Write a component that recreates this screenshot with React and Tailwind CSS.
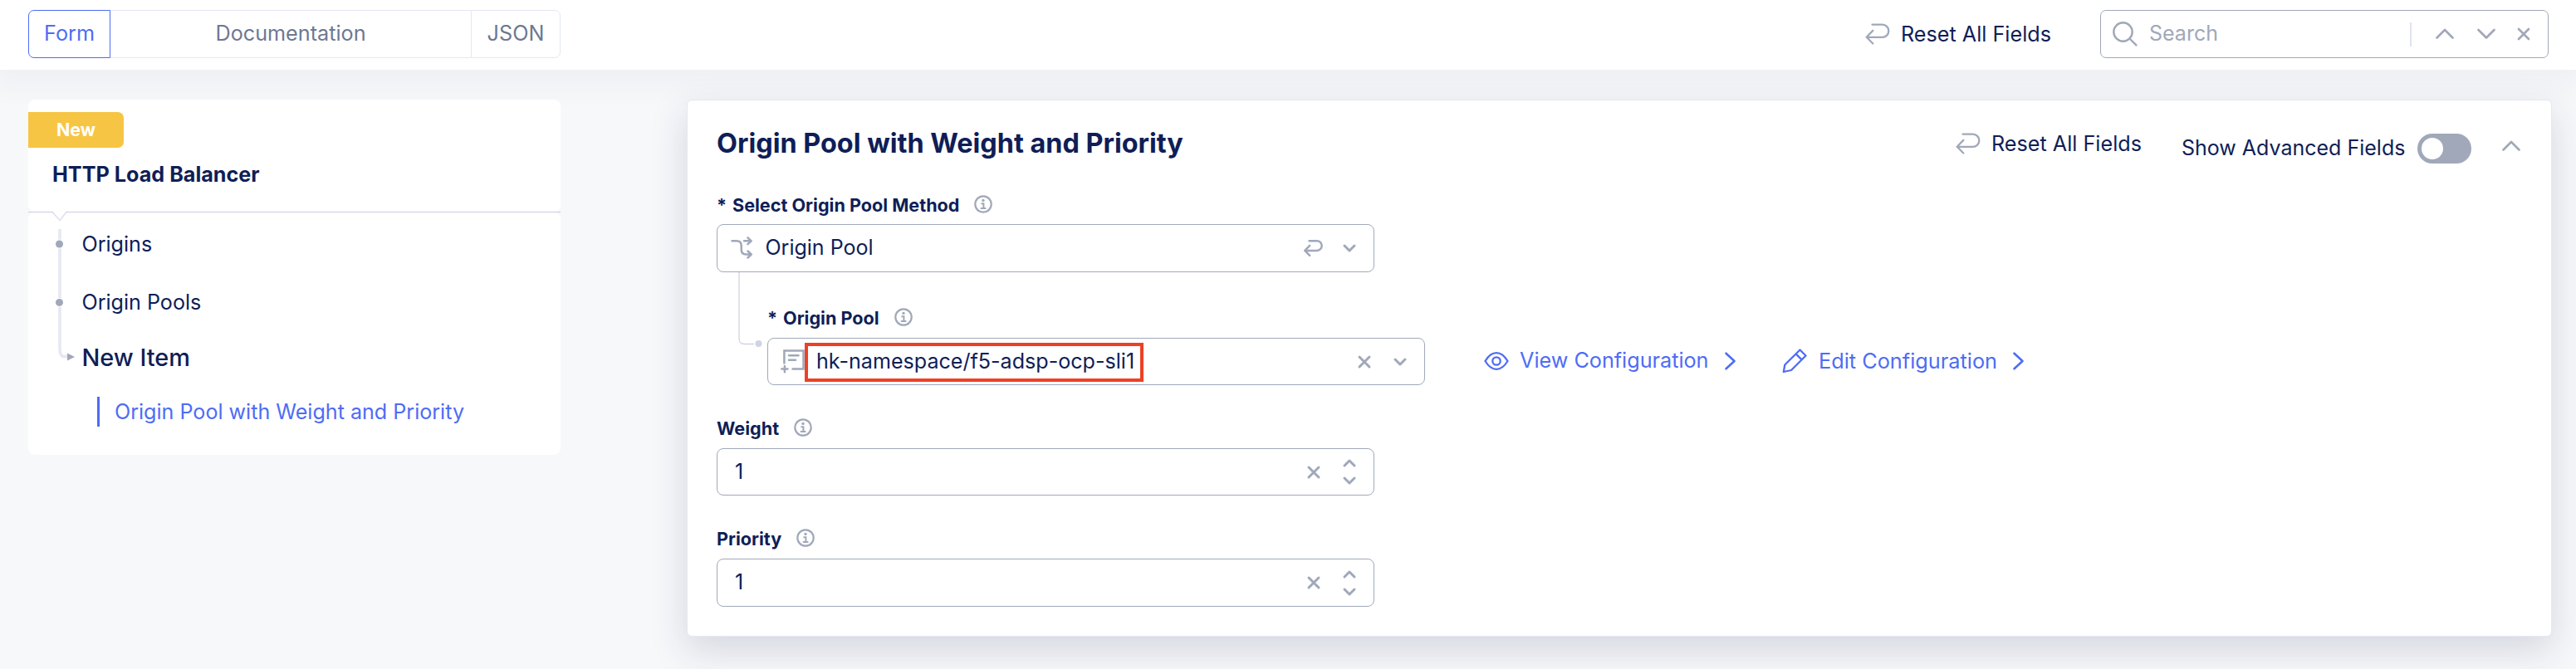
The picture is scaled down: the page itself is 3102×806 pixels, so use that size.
const NAVY = "text-[#0f1e57]";

function ReturnIcon({ className, w = 2.3 }) {
  return (
    <svg className={className} viewBox="0 0 30 26" fill="none" stroke="#a0a8b9" strokeWidth={w} strokeLinecap="round" strokeLinejoin="round">
      <path d="M8.500 1.600H20.700a7.600 7.600 0 0 1 0 15.200H1.700M9.300 8.900L1.700 16.800L9.300 24.500" />
    </svg>
  );
}

function Chevron({ className, d, w = 3 }) {
  return (
    <svg className={className} viewBox="0 0 24 24" fill="none" stroke="currentColor" strokeWidth={w} strokeLinecap="round" strokeLinejoin="round">
      <path d={d} />
    </svg>
  );
}
const UP = "M2.5 16.500L12 7L21.5 16.500";
const DOWN = "M2.5 7L12 16.500L21.5 7";
const SMALL_UP = "M6 15L12 9L18 15";
const SMALL_DOWN = "M6 9L12 15L18 9";
const CROSS = "M6 6L18 18M18 6L6 18";
const RIGHT = "M2.500 2.700L12.500 12L2.500 21.300";

function Info({ className = "" }) {
  return (
    <svg className={`h-[22px] w-[22px] shrink-0 ${className}`} viewBox="0 0 22 22" fill="none" stroke="#a0a8b9" strokeWidth="2.2">
      <circle cx="11" cy="11" r="9.7" />
      <circle cx="11" cy="6.4" r="1.7" fill="#a0a8b9" stroke="none" />
      <path d="M8.4 10.2H11.4V16M7.8 16H14.4" strokeWidth="2" />
    </svg>
  );
}

function Reset() {
  return (
    <div className="flex h-[32px] items-center text-[25.2px] leading-[32px] whitespace-nowrap">
      <ReturnIcon className="mr-[13px] h-[26px] w-[30px]" />
      <span className="w-[182px]">Reset All Fields</span>
    </div>
  );
}

function Label({ children, required }) {
  return (
    <div className="flex h-[30px] items-center text-[21.6px] leading-[30px] font-bold whitespace-nowrap">
      {required && <span className="w-[19px] shrink-0">*</span>}
      <span>{children}</span>
      <Info className="-mt-[3px] ml-[18px]" />
    </div>
  );
}

function NumberField({ value, height }) {
  return (
    <div className={`flex w-[792px] items-center rounded-[8px] border border-[#a0a8b9] pr-[17px] pl-[21px] text-[25px] ${height}`}>
      <span className="flex-1">{value}</span>
      <Chevron d={CROSS} className="mr-[19px] h-6 w-6 text-[#a0a8b9]" />
      <div className="flex flex-col text-[#a0a8b9]">
        <Chevron d={SMALL_UP} className="-mb-[3px] h-6 w-6" />
        <Chevron d={SMALL_DOWN} className="h-6 w-6" />
      </div>
    </div>
  );
}

function Header() {
  return (
    <header className="relative flex h-[84px] items-start bg-white pt-[12px] pr-[33px] pl-[34px] shadow-[0_14px_30px_10px_rgba(20,30,50,0.03)]">
      <div className="flex h-[58px] w-[641px] text-[25.2px] text-[#6e7891]">
        <div className="flex w-[99px] items-center justify-center rounded-l-[7px] border border-[#4f6cf5] text-[#4f6cf5]">Form</div>
        <div className="flex flex-1 items-center justify-center border-y border-[#e5e7f3]">Documentation</div>
        <div className="flex w-[108px] items-center justify-center rounded-r-[7px] border border-[#e5e7f3]">JSON</div>
      </div>
      <div className="flex-1" />
      <div className="mt-[13px] mr-[58px]"><Reset /></div>
      <div className="flex h-[58px] w-[540px] items-center rounded-[7px] border border-[#a0a8b9] pl-[14px] text-[#a0a8b9]">
        <svg className="h-[30px] w-[30px]" viewBox="0 0 30 30" fill="none" stroke="currentColor" strokeWidth="2.4" strokeLinecap="round">
          <circle cx="12.5" cy="12.5" r="11.2" />
          <path d="M20.5 20.5L28.4 28.4" />
        </svg>
        <span className="ml-[14px] flex-1 text-[25px]">Search</span>
        <span className="h-[29px] w-[2px] bg-[#e0e3ef]" />
        <div className="flex pr-[17px] pl-[28px]">
          <Chevron d={UP} className="h-6 w-6" w={2.7} />
          <Chevron d={DOWN} className="ml-[26px] h-6 w-6" w={2.7} />
          <Chevron d={CROSS} className="ml-[21px] h-6 w-6" w={2.7} />
        </div>
      </div>
    </header>
  );
}

function Sidebar() {
  return (
    <aside className="w-[641px]">
      <div className="h-[135px] rounded-[8px] bg-white pt-[15px]">
        <div className="flex h-[43px] w-[115px] items-center justify-center rounded-r-[7px] bg-[#f7c544] text-[21.4px] font-bold text-white">New</div>
        <h2 className="mt-[16px] pl-[29px] text-[25.2px] leading-[32px] font-bold">HTTP Load Balancer</h2>
      </div>
      <div className="h-px bg-[#cbcedf]" />
      <div className="relative h-[292px] rounded-[8px] bg-white text-[25.1px] leading-[32px]">
        <svg className="absolute -top-[2px] left-0 h-[190px] w-[80px]" viewBox="0 0 80 190" fill="none">
          <path d="M29 0H46L38 10.5Z" fill="#fff" />
          <path d="M29 1.5L38 11.5L46 1.5" stroke="#dcdeea" strokeWidth="1.4" />
          <path d="M38 22V166Q38 175.500 43 175.500H48" stroke="#e5e8f2" strokeWidth="3.6" />
          <circle cx="37.500" cy="40" r="5.500" fill="#fff" />
          <circle cx="37.500" cy="40" r="4.500" fill="#a0a8b9" />
          <circle cx="37.500" cy="110.400" r="5.500" fill="#fff" />
          <circle cx="37.500" cy="110.400" r="4.500" fill="#a0a8b9" />
          <path d="M47 171.500V180.500L56 176Z" fill="#a0a8b9" />
        </svg>
        <div className="pt-[22px] pl-[64.5px]">Origins</div>
        <div className="pt-[38px] pl-[64.5px]">Origin Pools</div>
        <div className="pt-[35px] pl-[64.5px] text-[28.9px] font-medium">New Item</div>
        <div className="mt-[31px] ml-[83px] flex h-[36px] items-center border-l-[3px] border-[#4f6cf5] pl-[18px] text-[#4f6cf5]">Origin Pool with Weight and Priority</div>
      </div>
    </aside>
  );
}

function Panel() {
  return (
    <main className="relative ml-[152px] h-[647px] w-[2246px] rounded-[6px] border border-[#e5e7f3] bg-white pl-[35px] shadow-[0_16px_44px_2px_rgba(30,40,80,0.15)]">
      <div className="flex h-[109px] items-start">
        <h1 className="mt-[32px] flex-1 text-[32.4px] leading-[40px] font-bold">Origin Pool with Weight and Priority</h1>
        <div className="mt-[36px] mr-[47px]"><Reset /></div>
        <div className="mt-[40px] flex h-[36px] items-center">
          <span className="mr-[15px] w-[269px] text-[25px] whitespace-nowrap">Show Advanced Fields</span>
          <span className="flex h-[36px] w-[65px] items-center rounded-full bg-[#a0a8b9] pl-[5px]">
            <span className="h-[26px] w-[26px] rounded-full bg-white" />
          </span>
          <Chevron d={UP} className="-mt-[7px] mr-[36px] ml-[36px] h-6 w-6 text-[#a0a8b9]" w={2.7} />
        </div>
      </div>

      <div className="mt-[2px] h-[38px]"><Label required>Select Origin Pool Method</Label></div>
      <div className="flex h-[58px] w-[792px] items-center rounded-[8px] border border-[#a0a8b9] pr-[17px] pl-[16px] text-[25px]">
        <svg className="h-[28px] w-[28px]" viewBox="0 0 28 28" fill="none" stroke="#a0a8b9" strokeWidth="2.500" strokeLinecap="round" strokeLinejoin="round">
          <path d="M1.500 5.300H7Q12.700 5.300 12.700 11V15.500Q12.700 21.500 18.500 21.500H24.500M20.500 17.500L24.700 21.500L20.500 25.500M16 5.300H24.500M20.500 1.400L24.700 5.300L20.500 9.200" />
        </svg>
        <span className="ml-[13.5px] flex-1">Origin Pool</span>
        <ReturnIcon className="mr-[20px] h-[20px] w-[23px]" w={3.2} />
        <Chevron d={SMALL_DOWN} className="h-6 w-6 text-[#a0a8b9]" />
      </div>

      <div className="relative h-[49px] pt-[40px] pl-[61px]">
        <svg className="absolute top-0 left-[26px] h-[94px] w-[32px]" viewBox="0 0 32 94" fill="none">
          <path d="M1 0V80Q1 86.500 8 86.500H19" stroke="#d0d3e3" strokeWidth="1.300" />
          <circle cx="24.500" cy="86" r="4" fill="#d0d3e3" />
        </svg>
        <Label required>Origin Pool</Label>
      </div>
      <div className="mt-[30px] flex items-center">
        <div className="relative ml-[61px] flex h-[57px] w-[792px] items-center rounded-[8px] border border-[#a0a8b9] pr-[17px] pl-[15px] text-[25.1px]">
          <svg className="h-[30px] w-[30px] shrink-0" viewBox="0 0 30 30" fill="none" stroke="#a0a8b9" strokeWidth="2.500" strokeLinecap="round">
            <path d="M4.400 16.500V1.500H27.500V23.400H14.500M10 7.200H21.500M10 12.800H18M1.300 23.600H8.500M4.900 20V27.200" />
          </svg>
          <span className="ml-[13px] flex-1">hk-namespace/f5-adsp-ocp-sli1</span>
          <Chevron d={CROSS} className="mr-[19px] h-6 w-6 text-[#a0a8b9]" />
          <Chevron d={SMALL_DOWN} className="h-6 w-6 text-[#a0a8b9]" />
          <span className="absolute top-[5px] left-[44px] h-[47px] w-[408px] border-4 border-[#ec4126]" />
        </div>
        <a className="-mt-px ml-[71px] flex items-center text-[25.2px] whitespace-nowrap text-[#4f6cf5]">
          <svg className="h-[30px] w-[30px]" viewBox="0 0 30 30" fill="none" stroke="currentColor" strokeWidth="2.300" strokeLinejoin="round">
            <path d="M1.500 15Q7.500 5.200 15 5.200T28.500 15Q22.500 24.800 15 24.800T1.500 15Z" />
            <circle cx="15" cy="15" r="4.700" />
          </svg>
          <span className="ml-[13px] w-[246px]">View Configuration</span>
          <Chevron d={RIGHT} className="h-6 w-6" w={2.600} />
        </a>
        <a className="-mt-px ml-[46px] flex items-center text-[25.3px] whitespace-nowrap text-[#4f6cf5]">
          <svg className="h-[30px] w-[30px]" viewBox="0 0 30 30" fill="none" stroke="currentColor" strokeWidth="2.300" strokeLinejoin="round">
            <path d="M21.500 1.500L28.500 8.500L11 26L1.800 28L3.300 19.500ZM16.600 6.400L23.600 13.400" />
          </svg>
          <span className="ml-[14px] w-[233px]">Edit Configuration</span>
          <Chevron d={RIGHT} className="h-6 w-6" w={2.600} />
        </a>
      </div>

      <div className="mt-[37px] h-[39px]"><Label>Weight</Label></div>
      <NumberField value="1" height="h-[57px]" />
      <div className="mt-[37px] h-[39px]"><Label>Priority</Label></div>
      <NumberField value="1" height="h-[58px]" />
    </main>
  );
}

export default function App() {
  return (
    <div className={`h-[806px] w-[3102px] overflow-hidden bg-[#f7f8fa] font-['Inter',sans-serif] ${NAVY}`}>
      <Header />
      <div className="relative flex items-start pt-[36px] pl-[34px]">
        <Sidebar />
        <Panel />
      </div>
    </div>
  );
}
